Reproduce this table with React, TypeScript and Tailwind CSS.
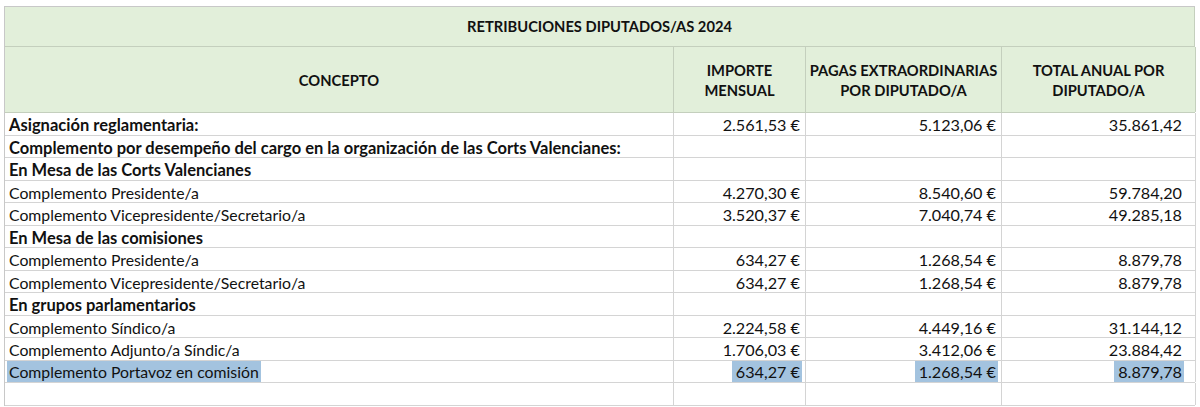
const rows: { label: string; bold?: boolean; m?: string; p?: string; t?: string; sel?: boolean }[] = [
    { label: "Asignación reglamentaria:", bold: true, m: "2.561,53 €", p: "5.123,06 €", t: "35.861,42" },
    { label: "Complemento por desempeño del cargo en la organización de las Corts Valencianes:", bold: true },
    { label: "En Mesa de las Corts Valencianes", bold: true },
    { label: "Complemento Presidente/a", m: "4.270,30 €", p: "8.540,60 €", t: "59.784,20" },
    { label: "Complemento Vicepresidente/Secretario/a", m: "3.520,37 €", p: "7.040,74 €", t: "49.285,18" },
    { label: "En Mesa de las comisiones", bold: true },
    { label: "Complemento Presidente/a", m: "634,27 €", p: "1.268,54 €", t: "8.879,78" },
    { label: "Complemento Vicepresidente/Secretario/a", m: "634,27 €", p: "1.268,54 €", t: "8.879,78" },
    { label: "En grupos parlamentarios", bold: true },
    { label: "Complemento Síndico/a", m: "2.224,58 €", p: "4.449,16 €", t: "31.144,12" },
    { label: "Complemento Adjunto/a Síndic/a", m: "1.706,03 €", p: "3.412,06 €", t: "23.884,42" },
    { label: "Complemento Portavoz en comisión", m: "634,27 €", p: "1.268,54 €", t: "8.879,78", sel: true },
    { label: "" },
];

function Val({ v, sel, total }: { v?: string; sel?: boolean; total?: boolean }) {
    return (
        <div className={`flex items-center justify-end border-r border-[#d4d4d4] text-[16.2px] ${total ? "pr-[13px]" : "pr-[5px]"}`}>
            {v && <span className={sel ? "bg-[#a3c3df] pl-[4px] pr-[2px] -mr-[2px] leading-[21px]" : ""}>{v}</span>}
        </div>
    );
}

export default function App() {
    return (
        <div className="w-[1200px] h-[407px] bg-white pt-[6px] pl-[4px] overflow-hidden text-[#111]" style={{ fontFamily: "Lato, 'Open Sans', sans-serif" }}>
            <div className="w-[1191px] border-l border-t border-[#c8c8c8]">
                {/* Title */}
                <div className="h-[40px] bg-[#e2efda] border-b border-r border-[#c4cfbd] flex items-center justify-center font-bold text-[14.7px]">
                    RETRIBUCIONES DIPUTADOS/AS 2024
                </div>

                {/* Column headers */}
                <div className="grid grid-cols-[669px_132px_196px_194px] h-[66px] bg-[#e2efda] border-b border-[#c4cfbd] font-bold text-[14.7px] leading-[20px] text-center">
                    <div className="flex items-center justify-center border-r border-[#c4cfbd]">CONCEPTO</div>
                    <div className="flex items-center justify-center border-r border-[#c4cfbd]">IMPORTE<br />MENSUAL</div>
                    <div className="flex items-center justify-center border-r border-[#c4cfbd]">PAGAS EXTRAORDINARIAS<br />POR DIPUTADO/A</div>
                    <div className="flex items-center justify-center border-r border-[#c4cfbd]">TOTAL ANUAL POR<br />DIPUTADO/A</div>
                </div>

                {/* Body */}
                {rows.map((r, i) => (
                    <div key={i} className="grid grid-cols-[669px_132px_196px_194px] h-[22.5px] border-b border-[#d4d4d4]">
                        <div className={`flex items-center pl-[4px] border-r border-[#d4d4d4] whitespace-nowrap ${r.bold ? "font-bold text-[16.5px]" : "text-[15.8px]"}`}>
                            <span className={r.sel ? "bg-[#a3c3df] leading-[21px] -ml-[2px] pl-[2px] pr-[2px]" : ""}>{r.label}</span>
                        </div>
                        <Val v={r.m} sel={r.sel} />
                        <Val v={r.p} sel={r.sel} />
                        <Val v={r.t} sel={r.sel} total />
                    </div>
                ))}
            </div>
        </div>
    );
}
